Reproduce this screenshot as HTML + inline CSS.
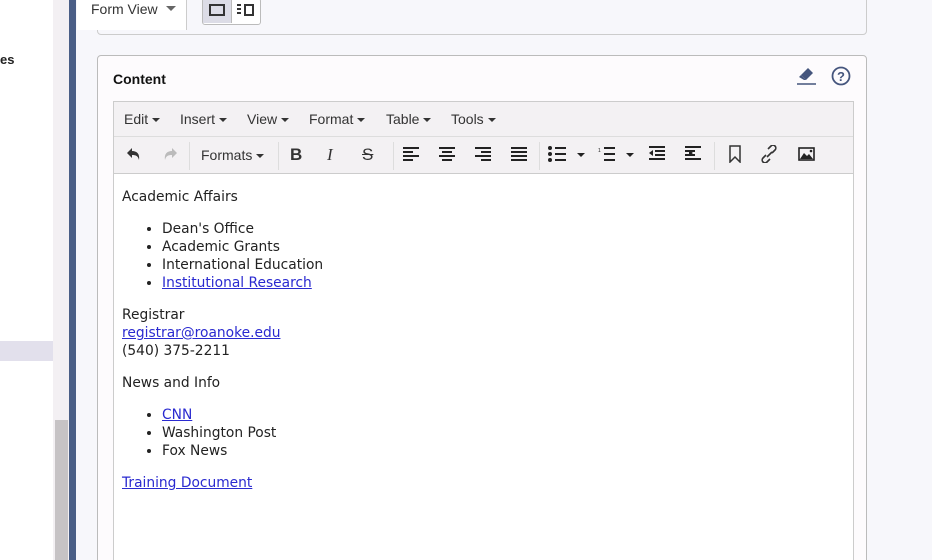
<!DOCTYPE html>
<html style="overflow:hidden;height:560px"><head><style>
body{margin:0;width:932px;height:560px;overflow:hidden;position:relative;font-family:"Liberation Sans",sans-serif;background:#f7f7fb}
.a{position:absolute}
.mi{position:absolute;top:111px;font-size:14px;color:#333}
.mi:after{content:"";display:inline-block;margin-left:4px;vertical-align:middle;border-left:4px solid transparent;border-right:4px solid transparent;border-top:4px solid #333}
.ed{position:absolute;left:122px;top:188px;font-family:"DejaVu Sans",sans-serif;font-size:13.8px;line-height:18px;color:#222}
.ed p{margin:0 0 14px}
.ed ul{margin:0 0 14px;padding-left:40px}
a{color:#2a2ad0}
</style></head><body>
<div class="a" style="left:0;top:0;width:53px;height:560px;background:#fff"></div>
<div class="a" style="left:0;top:52px;font-size:13px;font-weight:bold;color:#222">es</div>
<div class="a" style="left:0;top:341px;width:53px;height:20px;background:#e2e0ec"></div>
<div class="a" style="left:53px;top:0;width:16px;height:560px;background:#f3f0f3"></div>
<div class="a" style="left:55px;top:420px;width:13px;height:140px;background:#c6c3c5"></div>
<div class="a" style="left:69px;top:0;width:7px;height:560px;background:#4a5e86"></div>
<div class="a" style="left:97px;top:-5px;width:768px;height:38px;border:1px solid #ccc;border-radius:4px;background:#f7f7fb"></div>
<div class="a" style="left:77px;top:0;width:109px;height:30px;background:#fff;border-right:1px solid #ccc"></div>
<div class="a" style="left:91px;top:1px;font-size:14px;color:#333">Form View</div>
<div class="a" style="left:166px;top:6px;border-left:5px solid transparent;border-right:5px solid transparent;border-top:5px solid #666"></div>
<div class="a" style="left:202px;top:-2px;width:57px;height:25px;border:1px solid #bbb;border-radius:3px;background:#fff"></div>
<div class="a" style="left:203px;top:-1px;width:28px;height:24px;background:#dcdce6;border-right:1px solid #bbb"></div>
<div class="a" style="left:209px;top:4px;width:12px;height:8px;border:2px solid #333"></div>
<div class="a" style="left:237px;top:4px;width:4px;height:2px;background:#333;box-shadow:0 4px #333,0 8px #333"></div>
<div class="a" style="left:244px;top:4px;width:6px;height:8px;border:2px solid #333"></div>
<div class="a" style="left:97px;top:55px;width:768px;height:520px;border:1px solid #bbb;border-radius:4px;background:#fdfbfd"></div>
<div class="a" style="left:113px;top:71px;font-size:14px;font-weight:bold;color:#111">Content</div>
<svg class="a" style="left:796px;top:66px" width="22" height="20"><path d="M5 9 L12 2 L17 7 L10 14 Z" fill="#45557d"/><path d="M5 9 L10 14 L8 14 L3 11Z" fill="#45557d"/><line x1="1" y1="18" x2="20" y2="18" stroke="#45557d" stroke-width="1.5"/></svg>
<svg class="a" style="left:831px;top:66px" width="20" height="20"><circle cx="10" cy="10" r="8.5" fill="none" stroke="#45557d" stroke-width="1.8"/><text x="10" y="15" font-size="13" font-weight="bold" text-anchor="middle" fill="#45557d" font-family="Liberation Sans">?</text></svg>
<div class="a" style="left:113px;top:101px;width:739px;height:470px;border:1px solid #ccc;background:#fff"></div>
<div class="a" style="left:114px;top:102px;width:739px;height:71px;background:#f3f1f3;border-bottom:1px solid #ccc"></div>
<div class="a" style="left:114px;top:136px;width:739px;height:1px;background:#ddd"></div>
<div class="mi" style="left:124px">Edit</div><div class="mi" style="left:180px">Insert</div><div class="mi" style="left:247px">View</div><div class="mi" style="left:309px">Format</div><div class="mi" style="left:386px">Table</div><div class="mi" style="left:451px">Tools</div>
<svg class="a" style="left:124px;top:146px" width="60" height="18"><path d="M3 7 L8 2 V5 C13 5 16 8 15 14 C14 10 12 9 8 9 V12Z" fill="#333"/><path d="M53 7 L48 2 V5 C43 5 40 8 41 14 C42 10 44 9 48 9 V12Z" fill="#bbb"/></svg>
<div class="a" style="left:189px;top:142px;width:1px;height:28px;background:#ddd"></div>
<div class="mi" style="left:201px;top:147px">Formats</div>
<div class="a" style="left:278px;top:142px;width:1px;height:28px;background:#ddd"></div>
<div class="a" style="left:290px;top:145px;font-size:17px;font-weight:bold;color:#333">B</div>
<div class="a" style="left:327px;top:145px;font-size:17px;font-style:italic;font-family:'Liberation Serif';color:#333">I</div>
<div class="a" style="left:362px;top:145px;font-size:17px;text-decoration:line-through;color:#333">S</div>
<div class="a" style="left:393px;top:142px;width:1px;height:28px;background:#ddd"></div>
<svg class="a" style="left:400px;top:146px" width="130" height="16" stroke="#222" stroke-width="2"><path d="M3 2h16M3 6h10M3 10h16M3 14h10"/><path d="M39 2h16M42 6h10M39 10h16M42 14h10"/><path d="M75 2h16M81 6h10M75 10h16M81 14h10"/><path d="M111 2h16M111 6h16M111 10h16M111 14h16"/></svg>
<div class="a" style="left:539px;top:142px;width:1px;height:28px;background:#ddd"></div>
<svg class="a" style="left:547px;top:146px" width="160" height="16"><g fill="#222"><circle cx="3" cy="2" r="2"/><circle cx="3" cy="8" r="2"/><circle cx="3" cy="14" r="2"/><path d="M30 7h8l-4 4z"/><path d="M79 7h8l-4 4z"/></g><g stroke="#222" stroke-width="2"><path d="M8 2h11M8 8h11M8 14h11"/><path d="M57 2h11M57 8h11M57 14h11"/><path d="M102 1h16M108 5h10M108 9h10M102 13h16M138 1h16M138 5h10M138 9h10M138 13h16"/></g><path d="M106 4v6l-4-3z M142 4v6l4-3z" fill="#222"/><text x="51" y="6" font-size="5" fill="#222">1</text></svg>
<div class="a" style="left:714px;top:142px;width:1px;height:28px;background:#ddd"></div>
<svg class="a" style="left:726px;top:145px" width="95" height="18"><path d="M4 1h10v16l-5-5-5 5z" fill="none" stroke="#333" stroke-width="1.5"/><path d="M40 10l-3 3a2.5 2.5 0 0 0 4 4l3-3M46 8l3-3a2.5 2.5 0 0 0-4-4l-3 3M41 12l5-5" fill="none" stroke="#333" stroke-width="1.6"/><rect x="73" y="3" width="15" height="12" fill="none" stroke="#222" stroke-width="1.6"/><path d="M74 14l4-6 3 3 2-2 4 5z" fill="#222"/><circle cx="85" cy="6" r="1.3" fill="#222"/></svg>
<div class="ed">
<p>Academic Affairs</p>
<ul><li>Dean's Office</li><li>Academic Grants</li><li>International Education</li><li><a href="#">Institutional Research</a></li></ul>
<p>Registrar<br><a href="#">registrar@roanoke.edu</a><br>(540) 375-2211</p>
<p>News and Info</p>
<ul><li><a href="#">CNN</a></li><li>Washington Post</li><li>Fox News</li></ul>
<p><a href="#">Training Document</a></p>
</div>
</body></html>
